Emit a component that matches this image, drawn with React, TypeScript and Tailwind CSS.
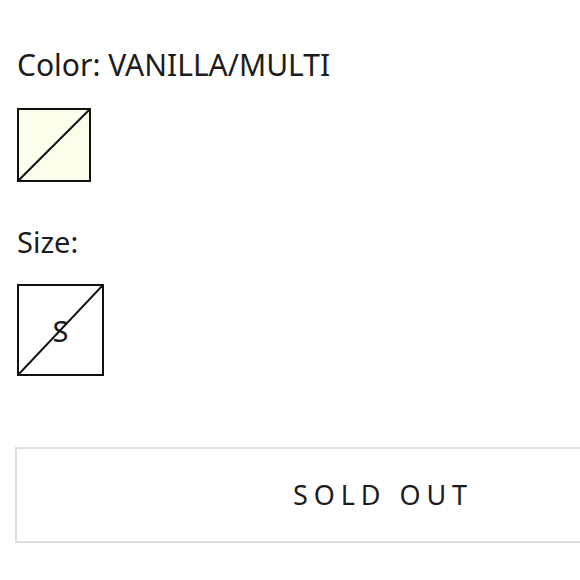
import React from "react";

export default function App() {
  return (
    <div className="w-[580px] h-[580px] overflow-hidden bg-white text-[#1c1c1c]" style={{ fontFamily: '"Noto Sans", "Open Sans", sans-serif' }}>
      <div className="pl-[17px] pt-[47px] flex flex-col">
        <div className="text-[30px] leading-[36px]">Color: VANILLA/MULTI</div>
        <div className="mt-[25px] relative w-[74px] h-[74px] border-2 border-[#111] bg-[#fdfdec]">
          <svg className="absolute inset-0" width="70" height="70" viewBox="0 0 70 70">
            <line x1="0" y1="70" x2="70" y2="0" stroke="#111" strokeWidth="2" />
          </svg>
        </div>
        <div className="mt-[42px] text-[29px] leading-[36px]">Size:</div>
        <div className="mt-[24px] relative w-[87px] h-[92px] border-2 border-[#111] flex items-center justify-center">
          <span className="text-[29px] leading-none">S</span>
          <svg className="absolute inset-0" width="83" height="88" viewBox="0 0 83 88">
            <line x1="0" y1="88" x2="83" y2="0" stroke="#111" strokeWidth="2" />
          </svg>
        </div>
        <div className="mt-[71px] -ml-[2px] w-[730px] h-[96px] shrink-0 border-2 border-[#dedede] flex items-center justify-center">
          <span className="text-[27px] tracking-[0.22em] pl-[0.22em]" style={{ fontFamily: '"Noto Sans", sans-serif' }}>SOLD OUT</span>
        </div>
      </div>
    </div>
  );
}
